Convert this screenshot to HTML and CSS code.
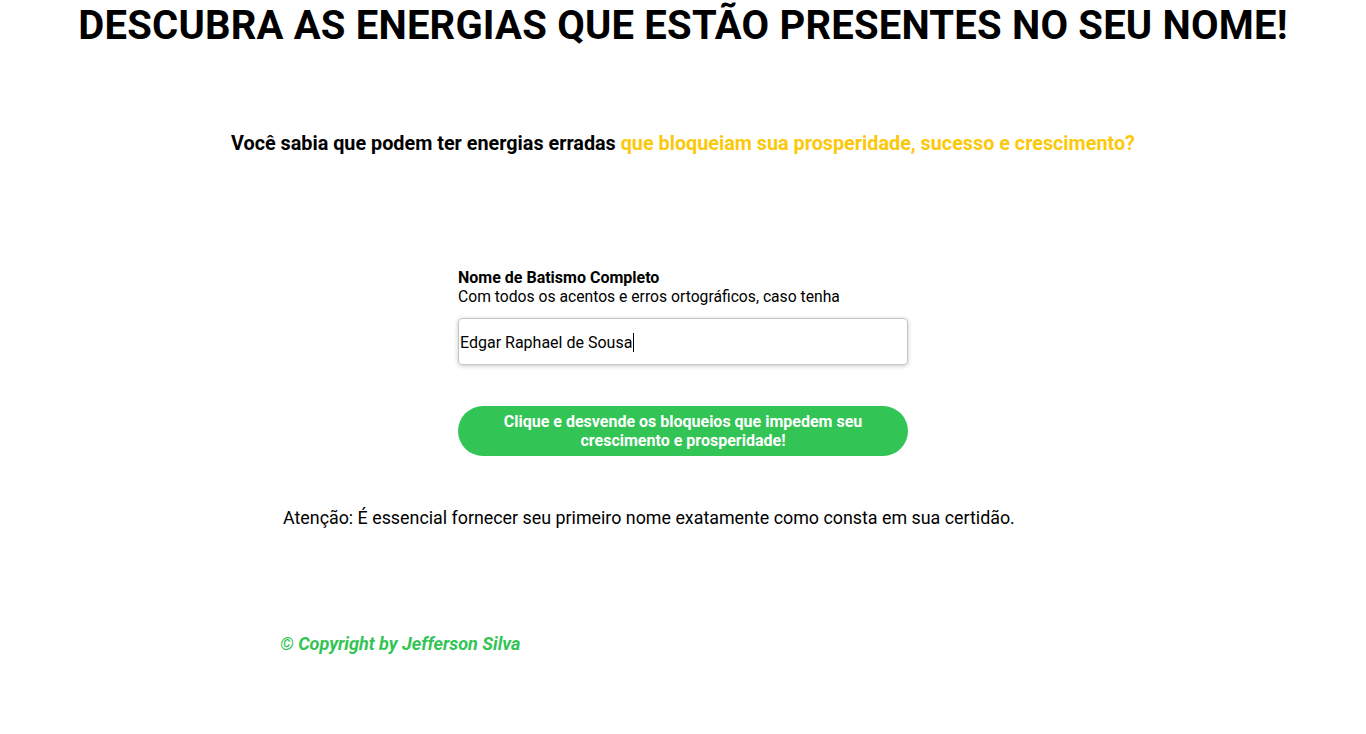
FILE: index.html
```html
<!DOCTYPE html>
<html lang="pt-BR">
<head>
<meta charset="utf-8">
<title>Descubra as energias</title>
<link rel="stylesheet" href="styles.css">
</head>
<body>
<main class="page">
  <h1 class="title">DESCUBRA AS ENERGIAS QUE ESTÃO PRESENTES NO SEU NOME!</h1>
  <p class="subtitle">Você sabia que podem ter energias erradas <span class="highlight">que bloqueiam sua prosperidade, sucesso e crescimento?</span></p>
  <form class="form">
    <label class="label" for="nome">
      <strong>Nome de Batismo Completo</strong>
      <span class="hint">Com todos os acentos e erros ortográficos, caso tenha</span>
    </label>
    <div class="input"><span>Edgar Raphael de Sousa</span><span class="caret"></span></div>
    <button type="button" class="button">Clique e desvende os bloqueios que impedem seu crescimento e prosperidade!</button>
  </form>
  <section class="notes">
    <p class="attention">Atenção: É essencial fornecer seu primeiro nome exatamente como consta em sua certidão.</p>
    <p class="copyright">© Copyright by Jefferson Silva</p>
  </section>
</main>
</body>
</html>
```
FILE: styles.css
```css
html, body {
  margin: 0;
  padding: 0;
  background: #ffffff;
}
body {
  font-family: Roboto, "Liberation Sans", sans-serif;
  color: #000;
}
.page {
  display: flex;
  flex-direction: column;
  align-items: center;
}
.title {
  margin: 0;
  padding-top: 2px;
  font-size: 40px;
  font-weight: 700;
  line-height: 47px;
  letter-spacing: 0.2px;
  text-align: center;
}
.subtitle {
  margin: 83px 0 0;
  font-size: 19.8px;
  font-weight: 700;
  line-height: 23px;
  text-align: center;
}
.highlight {
  color: #fcc80a;
}
.form {
  margin-top: 113px;
  width: 450px;
  display: flex;
  flex-direction: column;
}
.label {
  display: flex;
  flex-direction: column;
  font-size: 16px;
  line-height: 19px;
}
.label strong {
  font-weight: 700;
}
.hint {
  font-size: 15.7px;
}
.input {
  margin-top: 12px;
  box-sizing: content-box;
  border: 1px solid #c4c4c4;
  border-radius: 4px;
  box-shadow: 0 1px 4px rgba(0, 0, 0, 0.22);
  display: flex;
  align-items: center;
  padding: 2px 0 0 1px;
  height: 43px;
  font-size: 16px;
}
.caret {
  display: inline-block;
  width: 1px;
  height: 19px;
  background: #000;
  margin-left: 1px;
}
.button {
  margin-top: 41px;
  height: 50px;
  border: 0;
  border-radius: 25px;
  background: #32c454;
  color: #fff;
  font-family: Roboto, "Liberation Sans", sans-serif;
  font-size: 16px;
  font-weight: 700;
  line-height: 19px;
  padding: 0 40px;
  text-align: center;
}
.notes {
  align-self: stretch;
  padding-left: 280px;
  margin-top: 51px;
}
.attention {
  margin: 0;
  padding-left: 3px;
  font-size: 17.85px;
  line-height: 21px;
}
.copyright {
  margin: 105px 0 0;
  color: #32c454;
  font-size: 18px;
  font-weight: 700;
  font-style: italic;
  line-height: 21px;
}
```
